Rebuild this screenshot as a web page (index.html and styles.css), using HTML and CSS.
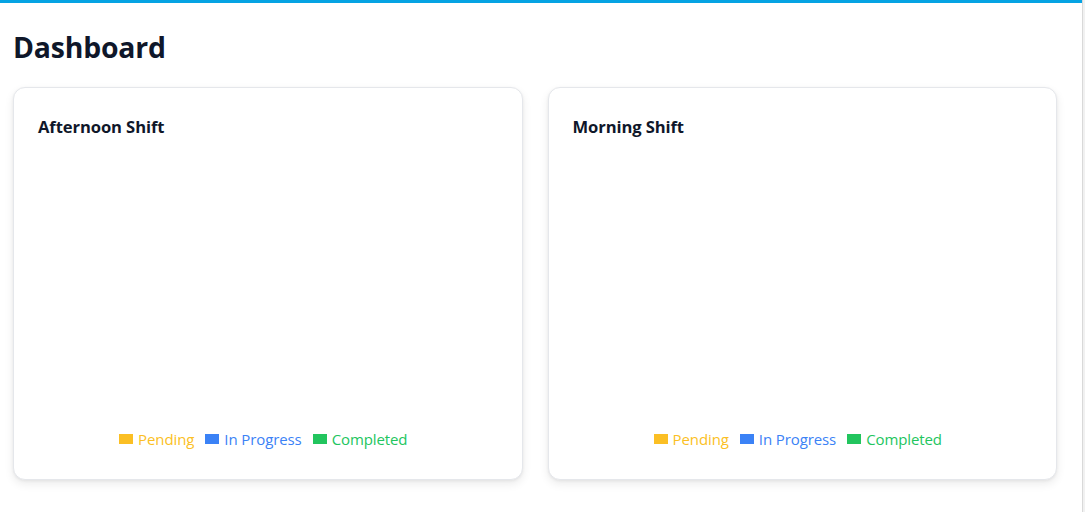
FILE: index.html
```html
<!DOCTYPE html>
<html>
<head>
<meta charset="utf-8">
<link rel="stylesheet" href="styles.css">
</head>
<body>
<div class="shell">
  <div class="page">
    <div class="topbar"></div>
    <main class="main">
      <h1 class="title">Dashboard</h1>
      <div class="grid">
        <section class="card">
          <h2 class="card-title">Afternoon Shift</h2>
          <div class="chart"></div>
          <ul class="legend">
            <li class="item pending"><span class="swatch"></span>Pending</li>
            <li class="item progress"><span class="swatch"></span>In Progress</li>
            <li class="item completed"><span class="swatch"></span>Completed</li>
          </ul>
        </section>
        <section class="card">
          <h2 class="card-title">Morning Shift</h2>
          <div class="chart"></div>
          <ul class="legend">
            <li class="item pending"><span class="swatch"></span>Pending</li>
            <li class="item progress"><span class="swatch"></span>In Progress</li>
            <li class="item completed"><span class="swatch"></span>Completed</li>
          </ul>
        </section>
      </div>
    </main>
  </div>
  <div class="scrollbar"></div>
</div>
</body>
</html>
```

FILE: styles.css
```css
* { box-sizing: border-box; }
html, body { margin: 0; padding: 0; height: 100%; overflow: hidden; }
body {
  font-family: "Open Sans", "Noto Sans", "Liberation Sans", sans-serif;
  background: #ffffff;
  color: #0f172a;
}
.shell { display: flex; height: 512px; }
.page { flex: 1; min-width: 0; }
.topbar { height: 3px; background: #05a3e3; }
.main { padding: 0 25px 0 13px; }
.title {
  margin: 0;
  padding-top: 24px;
  height: 84px;
  font-size: 28.4px;
  line-height: 40px;
  font-weight: 700;
  color: #0f172a;
  letter-spacing: -0.2px;
}
.grid {
  display: grid;
  grid-template-columns: 1fr 1fr;
  gap: 25px;
}
.card {
  height: 393px;
  border: 1px solid #e5e7eb;
  border-radius: 12px;
  background: #fff;
  box-shadow: 0 4px 10px rgba(0,0,0,0.08), 0 1px 3px rgba(0,0,0,0.06);
  padding: 25px 24px 0 24px;
  display: flex;
  flex-direction: column;
}
.card-title {
  margin: 0;
  font-size: 16.6px;
  line-height: 28px;
  font-weight: 700;
  color: #0f172a;
  letter-spacing: -0.1px;
}
.chart { flex: 1; }
.legend {
  list-style: none;
  margin: 0 0 30px 0;
  padding: 0 9px 0 0;
  display: flex;
  justify-content: center;
  gap: 11px;
  font-size: 15px;
  line-height: 20px;
  letter-spacing: -0.1px;
}
.item { display: flex; align-items: center; gap: 5px; }
.swatch { width: 14px; height: 10px; display: inline-block; }
.pending { color: #fbbf24; }
.pending .swatch { background: #fbbf24; }
.progress { color: #3b82f6; }
.progress .swatch { background: #3b82f6; }
.completed { color: #22c55e; }
.completed .swatch { background: #22c55e; }
.scrollbar {
  width: 3px;
  background: #f1f1f1;
  border-left: 1px solid #d9d9d9;
}
```
